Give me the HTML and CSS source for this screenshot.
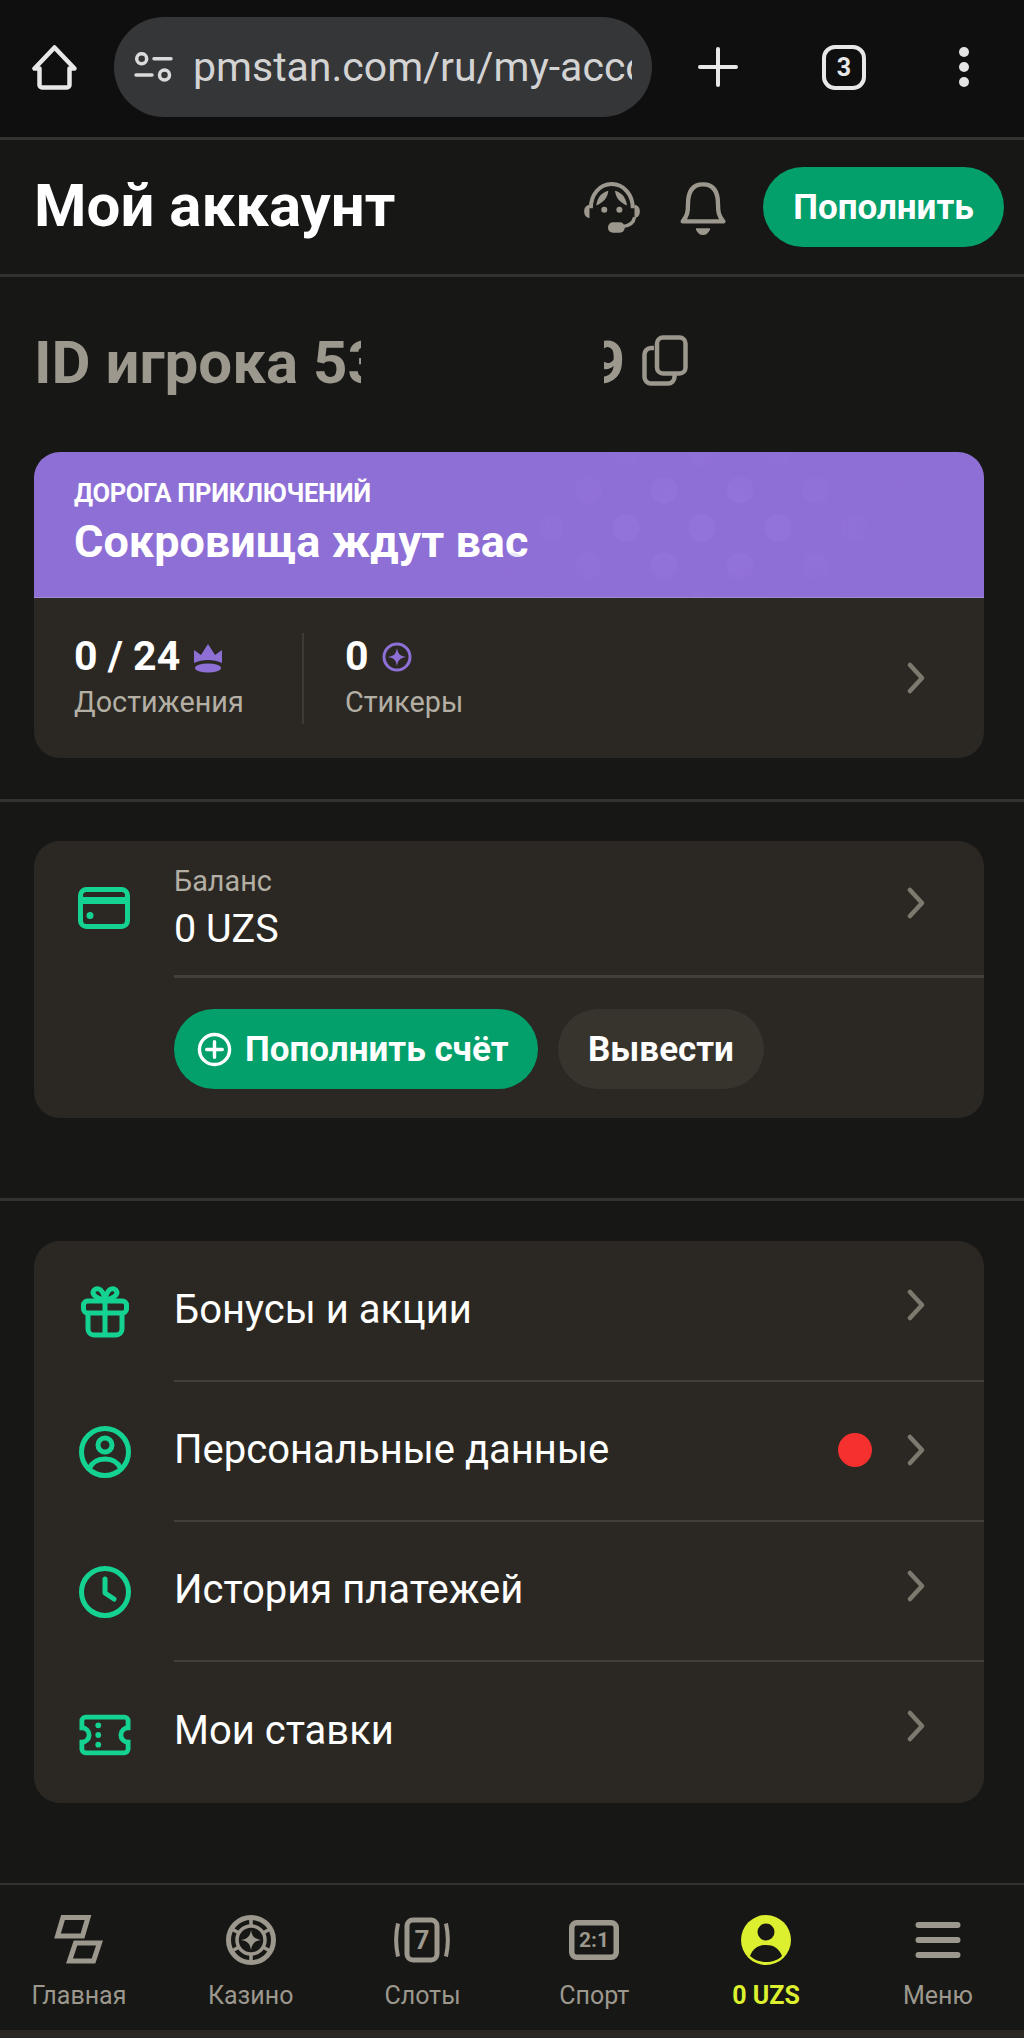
FILE: index.html
```html
<!DOCTYPE html>
<html lang="ru">
<head>
<meta charset="utf-8">
<title>Мой аккаунт</title>
<link rel="stylesheet" href="styles.css">
</head>
<body>
<div class="page">
  <div class="browser">
    <svg class="b-home" viewBox="0 0 45 45" fill="none"><path d="M22.500 2.500 2.500 23.500H7.500V40a2.500 2.500 0 0 0 2.500 2.500h25a2.500 2.500 0 0 0 2.500-2.500V23.500H42.500z" stroke="#e8e8e8" stroke-width="4.500" stroke-linejoin="round"/></svg>
    <div class="url">
      <svg class="url-ic" viewBox="0 0 39 30" fill="none" stroke="#dadada" stroke-width="3.500"><circle cx="7.700" cy="6.700" r="5"/><circle cx="30.500" cy="23" r="5"/><path d="M20 6.700h17M2 23h16" stroke-linecap="round"/></svg>
      <span class="url-text">pmstan.com/ru/my-account</span>
    </div>
    <svg class="b-plus" viewBox="0 0 40 40"><path d="M20 2v36M2 20h36" stroke="#e8e8e8" stroke-width="4" stroke-linecap="round"/></svg>
    <div class="tabs">3</div>
    <svg class="b-more" viewBox="0 0 12 42"><circle cx="6" cy="6" r="5" fill="#e4e4e4"/><circle cx="6" cy="21" r="5" fill="#e4e4e4"/><circle cx="6" cy="36" r="5" fill="#e4e4e4"/></svg>
  </div>

  <header class="top">
    <h1 class="title">Мой аккаунт</h1>
    <svg class="ic-support" viewBox="0 0 166 152" fill="none"><path d="M20 78C20 38 46 6 82 6s63 32 63 72" stroke="#9c988e" stroke-width="12"/><path d="M36 70C40 44 52 32 72 26 70 48 56 62 36 70zM92 26C112 32 124 44 128 70 108 62 94 48 92 26z" fill="#9c988e"/><circle cx="60" cy="83" r="9" fill="#9c988e"/><circle cx="105" cy="83" r="9" fill="#9c988e"/><path d="M16 68C5 70 0 78 0 88s5 18 16 20z" fill="#9c988e"/><path d="M150 68c11 2 16 10 16 20s-5 18-16 20z" fill="#9c988e"/><path d="M150 105c-2 18-14 25-36 28" stroke="#9c988e" stroke-width="10"/><rect x="71" y="120" width="50" height="31" rx="15" fill="#9c988e"/></svg>
    <svg class="ic-bell" viewBox="0 0 138 162" fill="none"><path d="M8 118C22 102 24 90 24 66 24 26 40 7 69 7s45 19 45 59c0 24 2 36 16 52z" stroke="#9c988e" stroke-width="13" stroke-linejoin="round"/><path d="M50 139h38c2 0 3 2 2 4-4 9-11 16-21 16s-17-7-21-16c-1-2 0-4 2-4z" fill="#9c988e"/></svg>
    <div class="btn-top">Пополнить</div>
  </header>

  <main class="content">
    <section class="id-block">
      <span class="id-a">ID игрока 53</span>
      <span class="id-b">9</span>
      <i class="id-mask"></i>
      <svg class="ic-copy" viewBox="0 0 46 51" fill="none"><rect x="15" y="2.500" width="28.500" height="36" rx="6" stroke="#9c988e" stroke-width="4.500"/><path d="M12 13H9a6.500 6.500 0 0 0-6.500 6.500V42A6.500 6.500 0 0 0 9 48.500h17a6.500 6.500 0 0 0 6.500-6.500v-2" stroke="#9c988e" stroke-width="4.500"/></svg>
    </section>

    <section class="card adv">
      <div class="adv-head">
        <div class="adv-kicker">ДОРОГА ПРИКЛЮЧЕНИЙ</div>
        <div class="adv-title">Сокровища ждут вас</div>
      </div>
      <div class="adv-body">
        <div class="stat stat-first">
          <div class="stat-num">0 / 24
            <svg class="ic-crown" viewBox="0 0 30 30"><path d="M1 20V7l7 5 7-11 7 11 7-5v13c-4-2-9-3-14-3s-10 1-14 3z" fill="#8e6fd6"/><ellipse cx="15" cy="25" rx="13" ry="4.500" fill="#8e6fd6"/></svg>
          </div>
          <div class="stat-label">Достижения</div>
        </div>
        <div class="stat">
          <div class="stat-num">0
            <svg class="ic-star" viewBox="0 0 30 30"><circle cx="15" cy="15" r="13" fill="none" stroke="#8e6fd6" stroke-width="3"/><path d="M15 6c1 6 3 8 9 9-6 1-8 3-9 9-1-6-3-8-9-9 6-1 8-3 9-9z" fill="#8e6fd6"/></svg>
          </div>
          <div class="stat-label">Стикеры</div>
        </div>
        <svg class="chev chev-adv" viewBox="0 0 20 32"><path d="M3 3l12 13L3 29" fill="none" stroke="#7d796f" stroke-width="4.500" stroke-linecap="round" stroke-linejoin="round"/></svg>
      </div>
    </section>

    <hr class="rule rule-a">

    <section class="card bal">
      <svg class="row-ic bal-ic" viewBox="0 0 52 42"><rect x="2.500" y="2.500" width="47" height="37" rx="6" fill="none" stroke="#14d392" stroke-width="5"/><rect x="2" y="10" width="48" height="7" fill="#14d392"/><circle cx="12" cy="28.500" r="3.500" fill="#14d392"/></svg>
      <div class="bal-main">
        <div class="bal-top">
          <div>
            <div class="bal-label">Баланс</div>
            <div class="bal-val">0 UZS</div>
          </div>
          <svg class="chev" viewBox="0 0 20 32"><path d="M3 3l12 13L3 29" fill="none" stroke="#7d796f" stroke-width="4.500" stroke-linecap="round" stroke-linejoin="round"/></svg>
        </div>
        <div class="bal-actions">
          <div class="btn-dep">
            <svg class="ic-plus" viewBox="0 0 36 36" fill="none"><circle cx="18" cy="18" r="15.500" stroke="#fff" stroke-width="3.500"/><path d="M18 10v16M10 18h16" stroke="#fff" stroke-width="3.500" stroke-linecap="round"/></svg>
            Пополнить счёт
          </div>
          <div class="btn-wd">Вывести</div>
        </div>
      </div>
    </section>

    <hr class="rule rule-b">

    <section class="card menu">
      <div class="m-row">
        <svg class="row-ic" viewBox="0 0 48 52" fill="none" stroke="#14d392" stroke-width="5" stroke-linejoin="round"><rect x="2.500" y="15" width="43" height="12" rx="4"/><path d="M7 27v16a6 6 0 0 0 6 6h22a6 6 0 0 0 6-6V27M24 15v34"/><path d="M24 15c-3-2-11-3-12-8 0-3 3-5 6-4 3 1 6 7 6 12zM24 15c3-2 11-3 12-8 0-3-3-5-6-4-3 1-6 7-6 12z"/></svg>
        <div class="m-main"><span>Бонусы и акции</span><svg class="chev chev-up" viewBox="0 0 20 32"><path d="M3 3l12 13L3 29" fill="none" stroke="#7d796f" stroke-width="4.500" stroke-linecap="round" stroke-linejoin="round"/></svg></div>
      </div>
      <div class="m-row">
        <svg class="row-ic" viewBox="0 0 52 52" fill="none" stroke="#14d392" stroke-width="5"><circle cx="26" cy="26" r="23.500"/><circle cx="26" cy="19" r="7"/><path d="M10 43c3-7 9-10 16-10s13 3 16 10"/></svg>
        <div class="m-main"><span>Персональные данные</span><i class="dot"></i><svg class="chev" viewBox="0 0 20 32"><path d="M3 3l12 13L3 29" fill="none" stroke="#7d796f" stroke-width="4.500" stroke-linecap="round" stroke-linejoin="round"/></svg></div>
      </div>
      <div class="m-row">
        <svg class="row-ic" viewBox="0 0 52 52" fill="none" stroke="#14d392" stroke-width="5" stroke-linecap="round" stroke-linejoin="round"><circle cx="26" cy="26" r="23.500"/><path d="M26 13v14l9 6"/></svg>
        <div class="m-main"><span>История платежей</span><svg class="chev chev-up" viewBox="0 0 20 32"><path d="M3 3l12 13L3 29" fill="none" stroke="#7d796f" stroke-width="4.500" stroke-linecap="round" stroke-linejoin="round"/></svg></div>
      </div>
      <div class="m-row">
        <svg class="row-ic ic-ticket" viewBox="0 0 54 42" fill="none"><path d="M7 2.500h40a4 4 0 0 1 4 4v7a7.500 7.500 0 0 0 0 15v7a4 4 0 0 1-4 4H7a4 4 0 0 1-4-4v-7a7.500 7.500 0 0 0 0-15v-7a4 4 0 0 1 4-4z" stroke="#14d392" stroke-width="5"/><circle cx="20" cy="11" r="3" fill="#14d392"/><circle cx="20" cy="21" r="3" fill="#14d392"/><circle cx="20" cy="31" r="3" fill="#14d392"/></svg>
        <div class="m-main"><span>Мои ставки</span><svg class="chev chev-up" viewBox="0 0 20 32"><path d="M3 3l12 13L3 29" fill="none" stroke="#7d796f" stroke-width="4.500" stroke-linecap="round" stroke-linejoin="round"/></svg></div>
      </div>
    </section>
  </main>

  <nav class="nav">
    <div class="nav-item">
      <svg class="nav-ic" viewBox="0 0 50 50" fill="none" stroke="#9c988e" stroke-width="5"><path d="M9 2.500H34L28.500 21H3.500zM21.500 28H45.500L39.500 46H15.500z"/></svg>
      <span>Главная</span>
    </div>
    <div class="nav-item">
      <svg class="nav-ic" viewBox="0 0 50 50" fill="none" stroke="#9c988e"><circle cx="25" cy="25" r="22.500" stroke-width="5"/><circle cx="25" cy="25" r="14" stroke-width="3.500"/><path d="M25 3v8M25 39v8M6 14l7 4M37 32l7 4M44 14l-7 4M13 32l-7 4" stroke-width="3.500"/><path d="M25 15c1 6.500 3.500 9 10 10-6.500 1-9 3.500-10 10-1-6.500-3.500-9-10-10 6.500-1 9-3.500 10-10z" fill="#9c988e" stroke="none"/></svg>
      <span>Казино</span>
    </div>
    <div class="nav-item">
      <svg class="nav-ic nav-ic-w" viewBox="0 -2.500 56 50" fill="none" stroke="#9c988e"><rect x="13" y="2.500" width="30" height="40" rx="6" stroke-width="5"/><path d="M4 6c-2.500 11-2.500 22 0 33M52 6c2.500 11 2.500 22 0 33" stroke-width="4"/><text x="28" y="31" class="nav-svg-t">7</text></svg>
      <span>Слоты</span>
    </div>
    <div class="nav-item">
      <svg class="nav-ic" viewBox="0 -5 50 50" fill="none" stroke="#9c988e" stroke-width="5.500"><rect x="2.750" y="2.750" width="44.500" height="34.500" rx="5"/><text x="25" y="27" class="nav-svg-s">2:1</text></svg>
      <span>Спорт</span>
    </div>
    <div class="nav-item nav-active">
      <svg class="nav-ic" viewBox="0 0 50 50"><circle cx="25" cy="25" r="25" fill="#dcf02f"/><circle cx="25" cy="17" r="8.500" fill="#171715"/><path d="M9 41c3-8 9-11 16-11s13 3 16 11c-4 4-10 6-16 6S13 45 9 41z" fill="#171715"/></svg>
      <span>0 UZS</span>
    </div>
    <div class="nav-item">
      <svg class="nav-ic" viewBox="0 0 50 50" fill="none" stroke="#9c988e" stroke-width="6" stroke-linecap="round"><path d="M5.500 10h39M5.500 25h39M5.500 40h39"/></svg>
      <span>Меню</span>
    </div>
  </nav>
  <div class="bottom-strip"></div>
</div>
</body>
</html>
```
FILE: styles.css
```css
* { box-sizing: border-box; }
html, body { margin: 0; padding: 0; background: #171715; }
body { font-family: Roboto, "Noto Sans", sans-serif; color: #fff; }
.page { width: 1024px; height: 2038px; overflow: hidden; display: flex; flex-direction: column; }

.browser { height: 140px; background: #0f0f0f; border-bottom: 3px solid #33322f; display: flex; align-items: center; padding: 0 0 3px 32px; flex: none; }
.b-home { width: 45px; height: 45px; flex: none; }
.url { width: 538px; height: 100px; margin-left: 37px; border-radius: 50px; background: #353638; display: flex; align-items: center; padding: 0 18px 0 20px; flex: none; }
.url-ic { width: 39px; height: 30px; flex: none; }
.url-text { margin-left: 20px; width: 439px; overflow: hidden; white-space: nowrap; font-size: 41px; color: #d3d3d3; }
.b-plus { width: 40px; height: 40px; margin-left: 46px; flex: none; }
.tabs { width: 44px; height: 45px; margin-left: 84px; border: 4px solid #e8e8e8; border-radius: 13px; flex: none; display: flex; align-items: center; justify-content: center; font-size: 25px; font-weight: 700; color: #e8e8e8; }
.b-more { width: 12px; height: 42px; margin-left: 92px; flex: none; }

.top { height: 137px; border-bottom: 3px solid #33322f; display: flex; align-items: center; padding: 0 20px 0 34px; flex: none; }
.title { margin: 0 0 4px; font-size: 60px; font-weight: 700; flex: 1; }
.ic-support { width: 56px; height: 51px; flex: none; }
.ic-bell { width: 46px; height: 54px; margin-left: 40px; margin-top: 3px; flex: none; }
.btn-top { margin-left: 37px; width: 241px; height: 80px; border-radius: 40px; background: #04a06b; display: flex; align-items: center; justify-content: center; font-size: 35px; font-weight: 700; }

.content { flex: 1; display: flex; flex-direction: column; padding: 0 40px 0 34px; }
.id-block { position: relative; height: 175px; display: flex; align-items: center; padding-bottom: 4px; font-size: 60px; font-weight: 700; color: #9c988e; flex: none; }
.id-a { white-space: nowrap; flex: none; }
.id-b { margin-left: 209px; flex: none; }
.id-mask { position: absolute; left: 327px; top: 40px; bottom: 40px; width: 243px; background: #171715; }
.ic-copy { width: 46px; height: 51px; margin-left: 17px; margin-top: -4px; flex: none; }

.card { background: #2b2823; border-radius: 26px; overflow: hidden; }
.adv { height: 306px; flex: none; }
.adv-head { position: relative; height: 146px; background: #8e6fd6; padding: 26px 40px 0; box-shadow: inset 0 -1px #a08cd0; }
.adv-head::after { content: ""; position: absolute; inset: 0 60px 1px 440px; background-image: radial-gradient(circle, #9273d9 0 13px, transparent 14px), radial-gradient(circle, #9273d9 0 13px, transparent 14px); background-size: 76px 76px; background-position: 0 0, 38px 38px; -webkit-mask-image: radial-gradient(ellipse 50% 70% at 50% 50%, #000 30%, transparent); mask-image: radial-gradient(ellipse 50% 70% at 50% 50%, #000 30%, transparent); }
.adv-kicker { font-size: 25.500px; font-weight: 700; line-height: 30px; letter-spacing: -0.3px; }
.adv-title { margin-top: 9px; font-size: 45px; font-weight: 700; line-height: 50px; }
.adv-body { display: flex; align-items: center; height: 160px; padding: 0 57px 0 40px; }
.stat { height: 91px; flex: none; }
.stat-first { border-right: 2px solid #3d3a34; width: 230px; margin-right: 41px; }
.stat-num { font-size: 41px; font-weight: 700; line-height: 48px; display: flex; align-items: center; gap: 13px; margin-top: -1px; }
.stat-label { font-size: 28.800px; color: #b3afa5; line-height: 40px; margin-top: 2px; }
.ic-crown { width: 30px; height: 30px; margin-top: 4px; }
.ic-star { width: 30px; height: 30px; margin-top: 2px; }
.chev { width: 20px; height: 32px; flex: none; }
.chev-adv { margin-left: auto; }
.chev-up { margin-top: -8px; }

.rule { border: 0; border-top: 3px solid #33322f; margin: 0 -40px 0 -34px; flex: none; }
.rule-a { margin-top: 41px; margin-bottom: 39px; }
.rule-b { margin-top: 80px; margin-bottom: 40px; }

.bal { height: 277px; flex: none; display: flex; padding-left: 45px; }
.bal-ic { margin: 41px 1px 0 -1px; }
.row-ic { width: 52px; height: 52px; flex: none; }
.ic-ticket { margin-top: 5px; }
.bal-main { flex: 1; margin-left: 43px; min-width: 0; }
.bal-top { height: 137px; border-bottom: 3px solid #42403a; display: flex; align-items: flex-start; justify-content: space-between; padding: 22px 57px 0 0; }
.bal-top .chev { margin-top: 24px; }
.bal-label { font-size: 28.800px; color: #b3afa5; line-height: 36px; }
.bal-val { font-size: 39.500px; line-height: 46px; margin-top: 7px; }
.bal-actions { display: flex; gap: 20px; margin-top: 31px; }
.btn-dep { width: 364px; height: 80px; border-radius: 40px; background: #04a06b; display: flex; align-items: center; padding-left: 23px; gap: 13px; font-size: 35px; font-weight: 700; }
.ic-plus { width: 35px; height: 35px; flex: none; }
.btn-wd { width: 206px; height: 80px; border-radius: 40px; background: #37342e; display: flex; align-items: center; justify-content: center; font-size: 35px; font-weight: 700; }

.menu { height: 562px; flex: none; display: flex; flex-direction: column; }
.m-row { display: flex; align-items: center; height: 140px; padding-left: 45px; }
.m-row:first-child, .m-row:last-child { height: 141px; }
.m-main { flex: 1; height: 100%; margin-left: 43px; display: flex; align-items: center; border-bottom: 2px solid #42403a; padding: 0 57px 3px 0; font-size: 40px; }
.m-row:last-child .m-main { border-bottom: 0; padding-bottom: 5px; }
.m-main span { flex: 1; }
.dot { width: 34px; height: 34px; border-radius: 50%; background: #f5302e; margin-right: 35px; flex: none; }

.nav { height: 147px; border-top: 2px solid #33322f; display: grid; grid-template-columns: repeat(6, 171.800px); margin-left: -7px; width: 1040px; padding-top: 30px; flex: none; }
.nav-item { display: flex; flex-direction: column; align-items: center; font-size: 25px; color: #9c988e; gap: 16px; }
.nav-ic { width: 50px; height: 50px; flex: none; }
.nav-ic-w { width: 56px; }
.nav-active { color: #dcf02f; font-weight: 700; }
.nav-svg-t { font-family: Roboto, sans-serif; font-size: 26px; font-weight: 700; fill: #9c988e; stroke: none; text-anchor: middle; }
.nav-svg-s { font-family: Roboto, sans-serif; font-size: 21px; font-weight: 700; fill: #9c988e; stroke: none; text-anchor: middle; }
.bottom-strip { height: 8px; background: #2b2823; flex: none; }
```
